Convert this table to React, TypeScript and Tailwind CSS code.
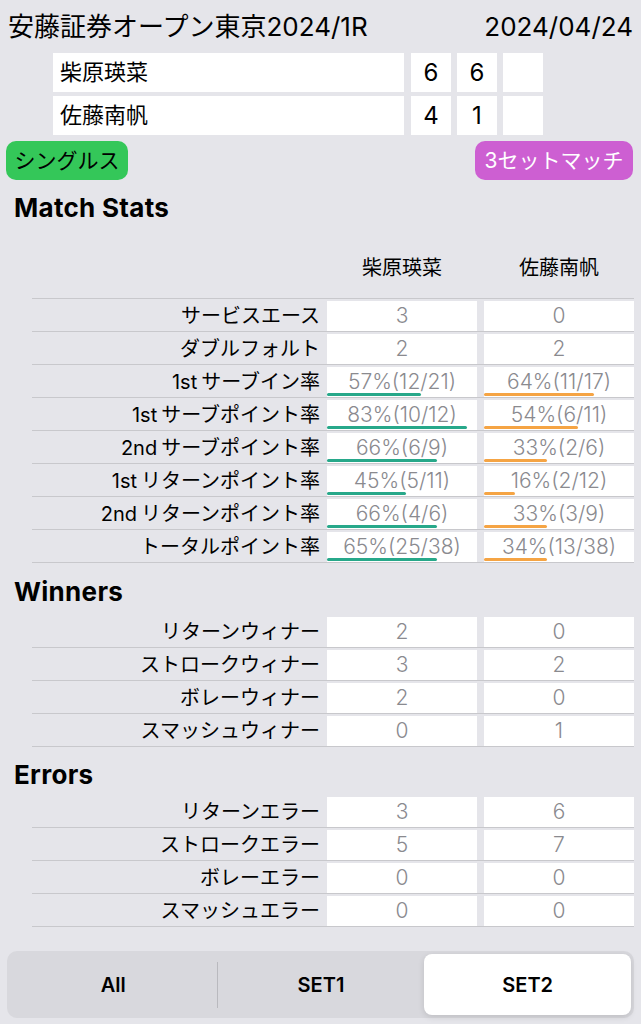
import React from 'react';

type Stat = { label: string; a: string; b: string; wa?: number; wb?: number };

const matchStats: Stat[] = [
  { label: 'サービスエース', a: '3', b: '0' },
  { label: 'ダブルフォルト', a: '2', b: '2' },
  { label: '1stサーブイン率', a: '57%(12/21)', b: '64%(11/17)', wa: 94, wb: 110 },
  { label: '1stサーブポイント率', a: '83%(10/12)', b: '54%(6/11)', wa: 140, wb: 94 },
  { label: '2ndサーブポイント率', a: '66%(6/9)', b: '33%(2/6)', wa: 110, wb: 63 },
  { label: '1stリターンポイント率', a: '45%(5/11)', b: '16%(2/12)', wa: 79, wb: 31 },
  { label: '2ndリターンポイント率', a: '66%(4/6)', b: '33%(3/9)', wa: 110, wb: 63 },
  { label: 'トータルポイント率', a: '65%(25/38)', b: '34%(13/38)', wa: 110, wb: 63 },
];

const winners: Stat[] = [
  { label: 'リターンウィナー', a: '2', b: '0' },
  { label: 'ストロークウィナー', a: '3', b: '2' },
  { label: 'ボレーウィナー', a: '2', b: '0' },
  { label: 'スマッシュウィナー', a: '0', b: '1' },
];

const errors: Stat[] = [
  { label: 'リターンエラー', a: '3', b: '6' },
  { label: 'ストロークエラー', a: '5', b: '7' },
  { label: 'ボレーエラー', a: '0', b: '0' },
  { label: 'スマッシュエラー', a: '0', b: '0' },
];

function Label({ text }: { text: string }) {
  // "1st" / "2nd" prefix sits a little apart from the kana
  const m = text.match(/^([0-9a-z]+)(.*)$/);
  if (!m) return <>{text}</>;
  return (
    <>
      <span className="mr-[4px]">{m[1]}</span>
      {m[2]}
    </>
  );
}

function Cell({ value, bar, barClass }: { value: string; bar?: number; barClass: string }) {
  return (
    <div className="relative w-[150px] bg-white flex items-center justify-center text-[21px] font-light text-[#8a8a8f]">
      {value}
      {bar !== undefined && (
        <div className={`absolute left-0 bottom-[1px] h-[3px] rounded-full ${barClass}`} style={{ width: `${bar}px` }} />
      )}
    </div>
  );
}

function StatRow({ stat }: { stat: Stat }) {
  return (
    <div className="flex h-[33px] ml-[32px] mr-[7px] border-b border-[#c8c8cc] pt-[2px]">
      <div className="flex-1 flex items-center justify-end pr-[7px] text-[20px] text-black">
        <Label text={stat.label} />
      </div>
      <div className="flex gap-[7px]">
        <Cell value={stat.a} bar={stat.wa} barClass="bg-[#27a88a]" />
        <Cell value={stat.b} bar={stat.wb} barClass="bg-[#f5a444]" />
      </div>
    </div>
  );
}

function ScoreRow({ name, s1, s2 }: { name: string; s1: string; s2: string }) {
  return (
    <div className="flex h-[39px] ml-[53px]">
      <div className="w-[351px] mr-[7px] bg-white flex items-center pl-[7px] text-[22px] text-black">{name}</div>
      <div className="flex gap-[6px]">
        <div className="w-[40px] bg-white flex items-center justify-center text-[24px] text-black">{s1}</div>
        <div className="w-[40px] bg-white flex items-center justify-center text-[24px] text-black">{s2}</div>
        <div className="w-[40px] bg-white" />
      </div>
    </div>
  );
}

export default function App() {
  return (
    <div className="min-h-screen bg-[#e5e5ea] font-[Inter,'Noto_Sans_CJK_JP',sans-serif] text-black">
      <div className="flex h-[52px] items-center justify-between px-[8px] text-[26px]">
        <span>安藤証券オープン東京2024/1R</span>
        <span>2024/04/24</span>
      </div>

      <div className="mt-[1px] flex flex-col gap-[4px]">
        <ScoreRow name="柴原瑛菜" s1="6" s2="6" />
        <ScoreRow name="佐藤南帆" s1="4" s2="1" />
      </div>

      <div className="mt-[6px] flex justify-between pl-[6px] pr-[8px]">
        <div className="flex h-[39px] w-[122px] items-center justify-center rounded-[10px] bg-[#34c759] text-[21px] text-black">
          シングルス
        </div>
        <div className="flex h-[39px] w-[158px] items-center justify-center rounded-[10px] bg-[#cd5fd2] text-[21px] text-white">
          3セットマッチ
        </div>
      </div>

      <h2 className="mt-[15px] pl-[14px] text-[26px] leading-[25px] font-bold tracking-[0.3px]">Match Stats</h2>
      <div className="flex h-[79px] items-end justify-end gap-[7px] ml-[32px] mr-[7px] border-b border-[#c8c8cc] pb-[16px]">
        <div className="w-[150px] text-center text-[20px] leading-[28px]">柴原瑛菜</div>
        <div className="w-[150px] text-center text-[20px] leading-[28px]">佐藤南帆</div>
      </div>
      {matchStats.map((s) => (
        <StatRow key={s.label} stat={s} />
      ))}

      <h2 className="mt-[16px] mb-[11px] pl-[14px] text-[26px] leading-[25px] font-bold tracking-[0.3px]">Winners</h2>
      {winners.map((s) => (
        <StatRow key={s.label} stat={s} />
      ))}

      <h2 className="mt-[15px] mb-[8px] pl-[14px] text-[26px] leading-[25px] font-bold tracking-[0.3px]">Errors</h2>
      {errors.map((s) => (
        <StatRow key={s.label} stat={s} />
      ))}

      <div className="mx-[7px] mt-[24px] flex h-[67px] rounded-[10px] bg-[#d8d8dd] p-[3px] text-[20px] font-semibold">
        <div className="flex flex-1 items-center justify-center">All</div>
        <div className="w-px self-center h-[46px] bg-[#b9b9be]" />
        <div className="flex flex-1 items-center justify-center">SET1</div>
        <div className="flex flex-1 items-center justify-center rounded-[8px] bg-white shadow-[0_2px_6px_rgba(0,0,0,0.12)]">SET2</div>
      </div>
    </div>
  );
}
